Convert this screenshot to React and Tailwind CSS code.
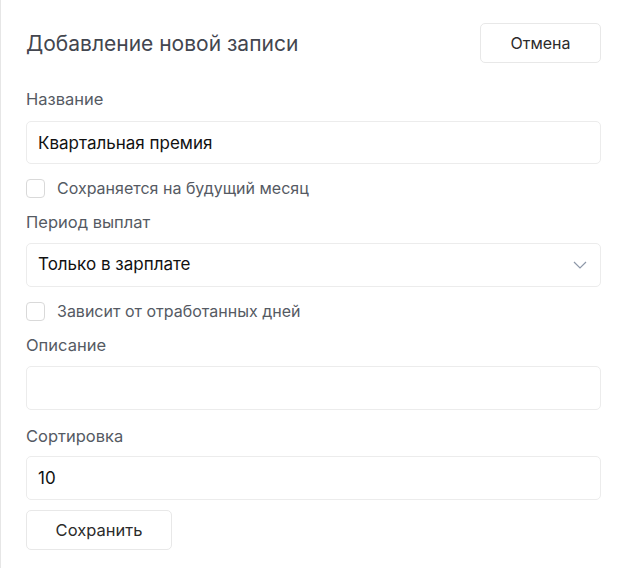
import React, { useState } from "react";

const App = () => {
  const [name, setName] = useState("Квартальная премия");
  const [sort, setSort] = useState("10");

  return (
    <div className="min-h-[568px] w-[626px] bg-white border-l border-[#e6e6e6] font-['Inter',sans-serif] text-[#212529]">
      <div className="pl-[25px] pr-[25px] pt-[23px]">
        <div className="flex items-center justify-between">
          <h1 className="text-[21px] text-[#43464f] leading-none">Добавление новой записи</h1>
          <button className="w-[121px] h-[40px] border border-[#e8e8e8] rounded-[5px] text-[16px] text-[#2b2b2b] bg-white">
            Отмена
          </button>
        </div>

        <label className="block mt-[26px] text-[16.5px] text-[#555a63] leading-[20px]">Название</label>
        <input
          value={name}
          onChange={(e) => setName(e.target.value)}
          className="mt-[12px] w-full h-[43px] border border-[#ececec] rounded-[5px] px-[11px] text-[17px] text-[#111] outline-none"
        />

        <div className="flex items-center mt-[14px] h-[20px]">
          <span className="w-[19px] h-[19px] border border-[#d9d9d9] rounded-[4px] bg-white" />
          <span className="ml-[12px] text-[16px] text-[#555a63]">Сохраняется на будущий месяц</span>
        </div>

        <label className="block mt-[14px] text-[16.5px] text-[#555a63] leading-[20px]">Период выплат</label>
        <div className="mt-[11px] w-full h-[44px] border border-[#ececec] rounded-[5px] px-[11px] flex items-center justify-between">
          <span className="text-[17px] text-[#111]">Только в зарплате</span>
          <svg width="14" height="8" viewBox="0 0 14 8" className="mr-[2px]">
            <path d="M1 1 L7 7 L13 1" fill="none" stroke="#8d97a8" strokeWidth="1.2" />
          </svg>
        </div>

        <div className="flex items-center mt-[14px] h-[20px]">
          <span className="w-[19px] h-[19px] border border-[#d9d9d9] rounded-[4px] bg-white" />
          <span className="ml-[12px] text-[16px] text-[#555a63]">Зависит от отработанных дней</span>
        </div>

        <label className="block mt-[14px] text-[16.5px] text-[#555a63] leading-[20px]">Описание</label>
        <input className="mt-[11px] w-full h-[44px] border border-[#ececec] rounded-[5px] px-[11px] text-[17px] outline-none" />

        <label className="block mt-[16px] text-[16.5px] text-[#555a63] leading-[20px]">Сортировка</label>
        <input
          value={sort}
          onChange={(e) => setSort(e.target.value)}
          className="mt-[10px] w-full h-[44px] border border-[#ececec] rounded-[5px] px-[11px] text-[17px] text-[#111] outline-none"
        />

        <button className="mt-[10px] w-[146px] h-[40px] border border-[#e8e8e8] rounded-[5px] text-[16.5px] text-[#2b2b2b] bg-white">
          Сохранить
        </button>
      </div>
    </div>
  );
};

export default App;
